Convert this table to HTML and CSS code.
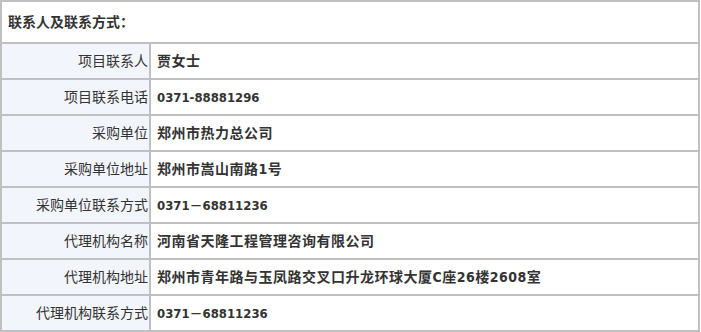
FILE: index.html
```html
<!DOCTYPE html>
<html lang="zh-CN">
<head>
<meta charset="utf-8">
<link rel="stylesheet" href="styles.css">
</head>
<body>
<table class="info">
  <colgroup><col class="col-label"><col class="col-value"></colgroup>
  <tr><td class="head" colspan="2">联系人及联系方式：</td></tr>
  <tr><td class="label">项目联系人</td><td class="value">贾女士</td></tr>
  <tr><td class="label">项目联系电话</td><td class="value"><span class="num">0371-88881296</span></td></tr>
  <tr><td class="label">采购单位</td><td class="value">郑州市热力总公司</td></tr>
  <tr><td class="label">采购单位地址</td><td class="value">郑州市嵩山南路1号</td></tr>
  <tr><td class="label">采购单位联系方式</td><td class="value"><span class="num">0371－68811236</span></td></tr>
  <tr><td class="label">代理机构名称</td><td class="value">河南省天隆工程管理咨询有限公司</td></tr>
  <tr><td class="label">代理机构地址</td><td class="value">郑州市青年路与玉凤路交叉口升龙环球大厦C座26楼2608室</td></tr>
  <tr><td class="label">代理机构联系方式</td><td class="value"><span class="num">0371－68811236</span></td></tr>
</table>
</body>
</html>
```
FILE: styles.css
```css
html, body {
  margin: 0;
  padding: 0;
  background: #fff;
}
body {
  font-family: "DejaVu Sans Condensed", "Noto Sans CJK SC", sans-serif;
  font-size: 14px;
  color: #333;
}
.info {
  width: 700px;
  border-collapse: collapse;
  table-layout: fixed;
}
.col-label {
  width: 149px;
}
.info td {
  border: 2px solid #c0c0c0;
  padding: 0;
  line-height: 18px;
  white-space: nowrap;
}
.info .head {
  height: 40px;
  padding-left: 6px;
  font-weight: bold;
}
.info .label {
  height: 34px;
  padding-right: 1px;
  text-align: right;
  background: #f3f5fc;
}
.info .value {
  height: 34px;
  padding-left: 6px;
  font-weight: bold;
  letter-spacing: 0.5px;
}
.num {
  font-size: 13px;
  letter-spacing: 0;
}
```
